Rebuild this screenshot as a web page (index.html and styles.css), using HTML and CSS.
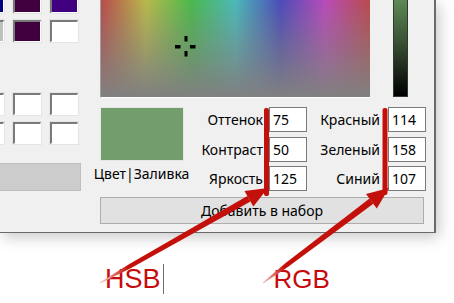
FILE: index.html
```html
<!DOCTYPE html>
<html lang="ru">
<head>
    <meta charset="UTF-8">
    <meta name="viewport" content="width=device-width, initial-scale=1.0">
    <title>Цвет</title>
    <link rel="stylesheet" href="styles.css">
</head>
<body>
    <div class="stage">
        <div class="dialog">
            <div class="palette">
                <div class="swatches basic">
                    <span class="sw navy"></span>
                    <span class="sw plum"></span>
                    <span class="sw violet"></span>
                    <span class="sw silver"></span>
                    <span class="sw plum"></span>
                    <span class="sw"></span>
                </div>
                <div class="swatches custom">
                    <span class="sw"></span>
                    <span class="sw"></span>
                    <span class="sw"></span>
                    <span class="sw"></span>
                    <span class="sw"></span>
                    <span class="sw"></span>
                </div>
                <button class="define" disabled></button>
            </div>

            <div class="main">
                <div class="pick-row">
                    <div class="spectrum">
                        <svg class="cross" width="24" height="24" viewBox="0 0 24 24">
                            <rect x="10.5" y="1" width="3" height="5.5" fill="#000"/>
                            <rect x="10.5" y="16" width="3" height="5.5" fill="#000"/>
                            <rect x="1" y="10" width="5.5" height="3.5" fill="#000"/>
                            <rect x="16" y="10" width="5.5" height="3.5" fill="#000"/>
                        </svg>
                    </div>
                    <div class="lum"></div>
                </div>

                <div class="fields-row">
                    <div class="sample-col">
                        <div class="sample"></div>
                        <div class="caption">Цвет|Заливка</div>
                    </div>
                    <div class="fields">
                        <label>Оттенок</label><input type="text" value="75">
                        <label>Красный</label><input type="text" value="114">
                        <label>Контраст</label><input type="text" value="50">
                        <label>Зеленый</label><input type="text" value="158">
                        <label>Яркость</label><input type="text" value="125">
                        <label>Синий</label><input type="text" value="107">
                    </div>
                </div>

                <button class="add">Добавить в набор</button>
            </div>
        </div>

        <div class="notes">
            <span class="note hsb">HSB<i class="caret"></i></span>
            <span class="note rgb">RGB</span>
        </div>

        <!-- красные стрелки поверх диалога -->
        <svg class="arrows" width="454" height="303" viewBox="0 0 454 303">
            <defs>
                <linearGradient id="fadeH" gradientUnits="userSpaceOnUse" x1="100" y1="283" x2="128" y2="267">
                    <stop offset="0" stop-color="#f6cccc"/>
                    <stop offset="1" stop-color="#c4100a"/>
                </linearGradient>
                <linearGradient id="fadeR" gradientUnits="userSpaceOnUse" x1="263" y1="283" x2="284" y2="267">
                    <stop offset="0" stop-color="#f6cccc"/>
                    <stop offset="1" stop-color="#c4100a"/>
                </linearGradient>
            </defs>
            <rect x="264" y="108" width="5" height="88" rx="2" fill="#c4100a"/>
            <polygon points="100.2,283.4 131.6,267.7 250.5,201.6 247.3,196 129.4,263.9 99.8,282.6" fill="url(#fadeH)"/>
            <polygon points="268,188 244.5,191 253.3,206.6" fill="#c4100a"/>

            <rect x="382.5" y="108" width="5" height="87" rx="2" fill="#c4100a"/>
            <polygon points="263.3,283.4 288.2,266.7 373.3,203.8 369.5,198.6 285.6,263.1 262.7,282.6" fill="url(#fadeR)"/>
            <polygon points="389,188 366,194 376.8,208.4" fill="#c4100a"/>
        </svg>
    </div>
</body>
</html>
```

FILE: styles.css
```css
body{
    margin: 0;
    background: #fff;
    font-family: "Noto Sans", sans-serif;
}
.stage{
    position: relative;
    width: 454px;
    height: 303px;
    overflow: hidden;
}
.dialog{
    display: flex;
    box-sizing: border-box;
    width: 436px;
    height: 233px;
    background: #f0f0f0;
    border-right: 2px solid #6a6a6a;
    border-bottom: 1px solid #6a6a6a;
    box-shadow: 3px 4px 14px rgba(0, 0, 0, 0.22);
    overflow: hidden;
}

/* левая колонка: палитра */
.palette{
    width: 82px;
    flex-shrink: 0;
}
.swatches{
    display: grid;
    grid-template-columns: repeat(3, 28px);
    grid-auto-rows: 22px;
    column-gap: 9px;
    row-gap: 7px;
    margin-left: -24px;
}
.basic{
    margin-top: -9px;
}
.custom{
    margin-top: 51px;
}
.sw{
    box-sizing: border-box;
    background: #fff;
    border-top: 2px solid #7a7a7a;
    border-left: 2px solid #7a7a7a;
    border-right: 1px solid #fff;
    border-bottom: 1px solid #fff;
    box-shadow: 0 0 0 1px #e4e4e4;
}
.navy{ background: #000080; }
.plum{ background: #400040; }
.violet{ background: #400080; }
.silver{ background: #c0c0c0; }
.define{
    display: block;
    box-sizing: border-box;
    margin: 19px 0 0 -120px;
    width: 201px;
    height: 28px;
    background: #cccccc;
    border: 1px solid #bfbfbf;
    padding: 0;
}

/* правая часть */
.main{
    margin-left: 18px;
    width: 326px;
}
.pick-row{
    display: flex;
    height: 98px;
}
.spectrum{
    position: relative;
    box-sizing: border-box;
    width: 270px;
    height: 98px;
    border-left: 1px solid #a0a0a0;
    border-bottom: 1px solid #fff;
    background:
        linear-gradient(to bottom, rgba(128, 128, 128, 0), #808080),
        linear-gradient(to right,
            hsl(0, 44%, 51%), hsl(60, 44%, 51%), hsl(120, 44%, 51%),
            hsl(180, 44%, 51%), hsl(240, 44%, 51%), hsl(300, 44%, 51%),
            hsl(360, 44%, 51%));
}
.cross{
    position: absolute;
    left: 73px;
    top: 35px;
}
.lum{
    box-sizing: border-box;
    margin-left: 23px;
    width: 15px;
    height: 97px;
    border: 1px solid #2e3a2c;
    border-top: 0;
    background: linear-gradient(#5c8a55, #384f33 45%, #000);
}

.fields-row{
    display: flex;
    margin-top: 9px;
}
.sample-col{
    display: flex;
    flex-direction: column;
    align-items: center;
    width: 83px;
}
.sample{
    box-sizing: border-box;
    width: 84px;
    height: 54px;
    background: #729e6b;
    border: 1px solid #e6e6e6;
}
.caption{
    margin-top: 4px;
    font-size: 14px;
    line-height: 18px;
    white-space: nowrap;
    color: #000;
}
.fields{
    display: grid;
    grid-template-columns: 86px 38px 81px 38px;
    grid-auto-rows: 25px;
    row-gap: 4.5px;
}
.fields label{
    font-size: 14px;
    line-height: 25px;
    text-align: right;
    color: #000;
}
.fields label:nth-of-type(odd){
    padding-right: 6px;
}
.fields label:nth-of-type(even){
    padding-right: 8px;
}
.fields input{
    box-sizing: border-box;
    width: 38px;
    height: 25px;
    margin: 0;
    padding: 0 3px;
    border: 1px solid #7a7a7a;
    background: #fff;
    font: 14px "Noto Sans", sans-serif;
    color: #000;
}
.add{
    display: block;
    box-sizing: border-box;
    margin-top: 6px;
    width: 324px;
    height: 27px;
    background: #e1e1e1;
    border: 1px solid #adadad;
    font: 14px "Noto Sans", sans-serif;
    color: #000;
    padding: 0;
}

/* подписи под диалогом */
.notes{
    display: flex;
    margin-top: 31px;
    padding-left: 105px;
}
.note{
    font-family: "Liberation Sans", Arial, sans-serif;
    font-size: 27px;
    line-height: 30px;
    color: #c80a0a;
}
.rgb{
    margin-left: 110px;
    font-size: 26px;
}
.caret{
    display: inline-block;
    width: 1px;
    height: 30px;
    margin-left: 2px;
    vertical-align: top;
    background: #6e6e6e;
}
.arrows{
    position: absolute;
    left: 0;
    top: 0;
    pointer-events: none;
}
```
